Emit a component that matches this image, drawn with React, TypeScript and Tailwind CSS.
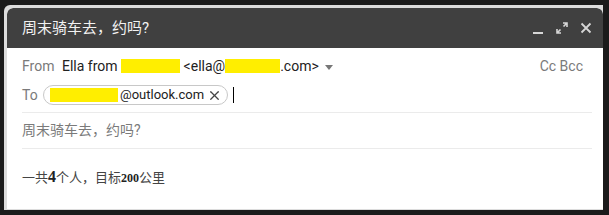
import { X } from "lucide-react";

const sans = "font-['Roboto','Noto_Sans_CJK_SC',sans-serif]";

function HeaderIcons() {
  return (
    <div className="flex items-center gap-[12px] text-[#d6d6d6]">
      <svg width="12" height="12" viewBox="0 0 12 12" className="mt-[2px]">
        <rect x="1" y="9" width="10" height="2" fill="currentColor" />
      </svg>
      <svg width="12" height="12" viewBox="0 0 12 12">
        <path d="M7 1h4v4M11 1L7.5 4.5M5 11H1V7M1 11l3.5-3.5" stroke="currentColor" strokeWidth="1.6" fill="none" />
      </svg>
      <svg width="12" height="12" viewBox="0 0 12 12">
        <path d="M1.5 1.5l9 9M10.5 1.5l-9 9" stroke="currentColor" strokeWidth="1.8" />
      </svg>
    </div>
  );
}

export default function App() {
  return (
    <div className={`w-[609px] h-[215px] bg-[#1b1b1b] pt-[5px] pl-[4px] overflow-hidden ${sans}`}>
      <div className="w-[599px] h-[205px] bg-[#dcdcdc] pt-[3px] pl-[3px] rounded-tl-[6px]">
        <div className="w-[596px] h-[201px] bg-white rounded-t-[6px] overflow-hidden flex flex-col">
          <div className="h-[40px] bg-[#404040] rounded-t-[6px] flex items-center justify-between pl-[15px] pr-[11px]">
            <span className="text-[15px] text-[#f2f2f2]">周末骑车去，约吗?</span>
            <HeaderIcons />
          </div>

          <div className="pl-[15px] pr-[11px] pt-[6px] flex flex-col">
            <div className="h-[24px] flex items-center text-[14px]">
              <span className="text-[#7a7a7a] w-[40px]">From</span>
              <span className="text-[#222]">Ella from</span>
              <span className="ml-[3px] w-[59px] h-[14px] bg-[#ffee00]" />
              <span className="ml-[4px] text-[#222]">&lt;ella@</span>
              <span className="w-[55px] h-[14px] bg-[#ffee00]" />
              <span className="text-[#222]">.com&gt;</span>
              <svg width="8" height="5" viewBox="0 0 8 5" className="ml-[6px] mt-[2px]">
                <path d="M0 0h8L4 5z" fill="#777" />
              </svg>
              <span className="ml-auto mr-[9px] text-[#7a7a7a]">Cc Bcc</span>
            </div>

            <div className="mt-[6px] h-[22px] flex items-center text-[14px]">
              <span className="text-[#7a7a7a] w-[21px]">To</span>
              <div className="h-[20px] flex items-center rounded-full border border-[#c8c8c8] pl-[6px] pr-[5px]">
                <span className="w-[68px] h-[14px] bg-[#ffee00]" />
                <span className="ml-[2px] text-[13px] text-[#222]">@outlook.com</span>
                <X size={15} strokeWidth={2} className="ml-[3px] text-[#444]" />
              </div>
              <span className="ml-[5px] w-px h-[16px] bg-black" />
            </div>

            <div className="mt-[6px] h-[37px] border-y border-[#ebebeb] flex items-center">
              <span className="text-[14px] text-[#7a7a7a]">周末骑车去，约吗?</span>
            </div>

            <div className="pt-[18px] text-[13px] leading-[20px] text-[#444]">
              一共<span className="font-['Liberation_Serif',serif] text-[16px] font-bold text-[#222]">4</span>个人，目标
              <span className="font-['Liberation_Serif',serif] text-[12px] font-bold text-[#222]">200</span>公里
            </div>
          </div>
        </div>
      </div>
    </div>
  );
}
